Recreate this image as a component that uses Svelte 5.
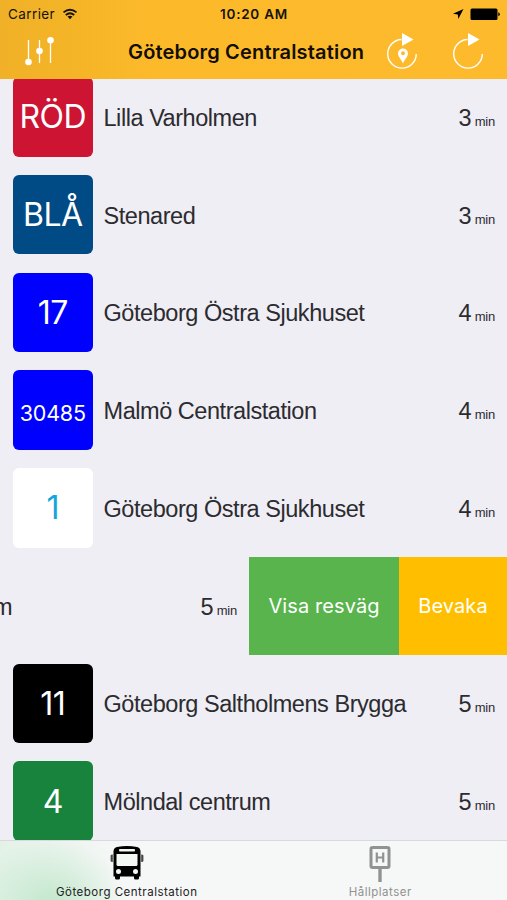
<script>
  const departures = [
    { line: 'RÖD', name: 'Lilla Varholmen', minutes: 3, color: '#cd1432' },
    { line: 'BLÅ', name: 'Stenared', minutes: 3, color: '#004b85' },
    { line: '17', name: 'Göteborg Östra Sjukhuset', minutes: 4, color: '#0000ff' },
    { line: '30485', name: 'Malmö Centralstation', minutes: 4, color: '#0000ff' },
    { line: '1', name: 'Göteborg Östra Sjukhuset', minutes: 4, color: '#ffffff', text: '#14a5dc' },
    { name: 'm', minutes: 5, swiped: true },
    { line: '11', name: 'Göteborg Saltholmens Brygga', minutes: 5, color: '#000000' },
    { line: '4', name: 'Mölndal centrum', minutes: 5, color: '#17833c' }
  ];
</script>

<div class="phone">
  <header>
    <div class="status-bar">
      <div class="carrier">
        <span>Carrier</span>
        <svg width="16" height="12" viewBox="0 0 16 12">
          <path d="M1.5 4.4Q8-1 14.5 4.4M3.8 7Q8 3.5 12.2 7" fill="none" stroke="#15120a" stroke-width="1.8" />
          <path d="M5.5 8.6Q8 6.7 10.5 8.6L8 11.2z" fill="#15120a" />
        </svg>
      </div>
      <span class="clock">10:20 AM</span>
      <div class="battery">
        <svg width="48" height="14" viewBox="0 0 48 14">
          <path d="M11.5 2L1 6.8L5.8 7.5L6.3 12z" fill="#000" />
          <rect x="18.5" y="1.5" width="27" height="11.5" rx="1.5" fill="#000" />
          <path d="M46.3 5.2q1.5.4 1.5 2t-1.5 2z" fill="#000" />
        </svg>
      </div>
    </div>
    <div class="nav-bar">
      <button aria-label="Filter" class="filter">
        <svg width="30" height="30" viewBox="0 0 30 30" fill="#fff">
          <path d="M4.5 3v22M15.5 3v23M26.5 3v23" stroke="#fff" stroke-width="1.3" />
          <circle cx="4.5" cy="25" r="3.3" />
          <circle cx="15.5" cy="14" r="3.3" />
          <circle cx="26.5" cy="3.3" r="3.3" />
        </svg>
      </button>
      <h1>Göteborg Centralstation</h1>
      <div class="nav-actions">
        <button aria-label="Nearby">
          <svg width="32" height="38" viewBox="0 0 32 38">
            <path d="M15.5 7.5A14.3 14.3 0 1 0 30.3 22" fill="none" stroke="#fff" stroke-width="1.4" />
            <path d="M16 1v13l11.5-6.5z" fill="#fff" />
            <path d="M17 31.5c-1-3.5-5-6.5-5-10a5 5 0 0 1 10 0c0 3.5-4 6.5-5 10zM17 19.3a2 2 0 1 0 0 4 2 2 0 0 0 0-4z" fill="#fff" fill-rule="evenodd" />
          </svg>
        </button>
        <button aria-label="Refresh">
          <svg width="32" height="38" viewBox="0 0 32 38">
            <path d="M15.5 7.5A14.3 14.3 0 1 0 30.3 22" fill="none" stroke="#fff" stroke-width="1.4" />
            <path d="M16 1v13l11.5-6.5z" fill="#fff" />
          </svg>
        </button>
      </div>
    </div>
  </header>

  <main>
    {#each departures as departure}
      <div class="departure" class:swiped={departure.swiped}>
        {#if !departure.swiped}
          <div
            class="line"
            class:small={departure.line.length > 3}
            style:background={departure.color}
            style:color={departure.text ?? '#fff'}
          >
            {departure.line}
          </div>
        {/if}
        <span class="name">{departure.name}</span>
        <span class="time">{departure.minutes}<small>min</small></span>
        {#if departure.swiped}
          <button class="action route">Visa resväg</button>
          <button class="action watch">Bevaka</button>
        {/if}
      </div>
    {/each}
  </main>

  <nav class="tab-bar">
    <div class="tab active">
      <svg width="34" height="34" viewBox="0 0 34 34">
        <path d="M7 1Q17-.8 27 1Q30 1.6 30.5 5V30.5H29V32a1.5 1.5 0 0 1-1.5 1.5h-2A1.5 1.5 0 0 1 24 32V30.5H10V32a1.5 1.5 0 0 1-1.5 1.5h-2A1.5 1.5 0 0 1 5 32V30.5H3.5V5Q4 1.6 7 1z" fill="#000" />
        <rect x="9" y="3" width="16" height="2.4" rx="1" fill="#f4f8f5" />
        <path d="M6.5 8h21v10.5q0 1.5-1.5 1.5H8q-1.5 0-1.5-1.5z" fill="#f4f8f5" />
        <circle cx="8.5" cy="25.5" r="2.5" fill="#f4f8f5" />
        <circle cx="25.5" cy="25.5" r="2.5" fill="#f4f8f5" />
        <path d="M.6 9.500q0-1 2.2-1v7.500q-2.200 0-2.200-1zM33.400 9.500q0-1-2.200-1v7.500q2.200 0 2.200-1z" fill="#444" />
      </svg>
      <span>Göteborg Centralstation</span>
    </div>
    <div class="tab">
      <svg width="22" height="38" viewBox="0 0 22 38" fill="none" stroke="#929292">
        <rect x="2" y="1.5" width="18" height="20" rx="1.5" stroke-width="3" />
        <path d="M7.8 6.5v10M14.2 6.5v10M7.8 11.5h6.4" stroke-width="2.2" />
        <path d="M11 22v14" stroke-width="3.4" />
      </svg>
      <span>Hållplatser</span>
    </div>
  </nav>
</div>

<style>
  :global(body) {
    margin: 0;
  }

  .phone {
    display: flex;
    flex-direction: column;
    width: 507px;
    height: 900px;
    overflow: hidden;
    background: #efeef4;
    font-family: Inter, "Liberation Sans", sans-serif;
    color: #2b2b30;
  }

  button {
    padding: 0;
    border: 0;
    background: none;
    font: inherit;
    cursor: pointer;
  }

  svg {
    display: block;
  }

  header {
    flex: none;
    height: 79px;
    background: linear-gradient(90deg, #f0b128 0, #f5b527 85px, #fcba2b 150px, #fdba2c 100%);
  }

  .status-bar {
    display: grid;
    grid-template-columns: 1fr auto 1fr;
    align-items: center;
    height: 27px;
    padding: 0 7px 0 8px;
    font-size: 13.5px;
    color: #15120a;
  }

  .carrier {
    display: flex;
    align-items: center;
    gap: 7px;
    letter-spacing: 0.4px;
  }

  .clock {
    font-weight: 600;
    letter-spacing: 0.75px;
  }

  .battery {
    display: flex;
    justify-content: flex-end;
  }

  .nav-bar {
    display: grid;
    grid-template-columns: 104px 1fr 120px;
    align-items: center;
    height: 48px;
    padding: 0 23px 0 24px;
  }

  .filter {
    width: 30px;
    height: 29px;
  }

  h1 {
    margin: 2px 0 0;
    font-size: 20px;
    font-weight: 600;
    letter-spacing: 0.17px;
    white-space: nowrap;
    color: #120e04;
  }

  .nav-actions {
    display: flex;
    justify-content: flex-end;
    gap: 34px;
  }

  main {
    flex: 1;
    min-height: 0;
    overflow: hidden;
  }

  .departure {
    display: flex;
    align-items: center;
    height: 97.75px;
    padding: 0 12px 0 13px;
    box-sizing: border-box;
  }

  .departure:first-child {
    margin-top: -11px;
  }

  .line {
    display: flex;
    flex: none;
    align-items: center;
    justify-content: center;
    width: 79.5px;
    height: 79.5px;
    margin-right: 11px;
    border-radius: 6px;
    font-size: 32px;
    font-weight: 400;
    letter-spacing: -0.6px;
  }

  .line.small {
    padding-top: 5px;
    box-sizing: border-box;
    font-size: 21.5px;
    letter-spacing: -0.2px;
  }

  .name,
  .time {
    padding-top: 3px;
    font-family: "Liberation Sans", Arial, sans-serif;
    font-size: 23.5px;
  }

  .name {
    flex: 1;
    letter-spacing: -0.45px;
    white-space: nowrap;
  }

  small {
    margin-left: 3px;
    font-size: 13px;
    letter-spacing: -0.2px;
  }

  .departure.swiped {
    padding: 0;
  }

  .swiped .name {
    margin-left: -7px;
  }

  .swiped .time {
    margin-right: 12px;
  }

  .action {
    height: 100%;
    font-size: 20px;
    letter-spacing: 0.1px;
    color: #fff;
  }

  .route {
    width: 150px;
    background: #59b44d;
  }

  .watch {
    width: 108px;
    background: #ffbf00;
  }

  .tab-bar {
    display: flex;
    flex: none;
    height: 60px;
    box-sizing: border-box;
    border-top: 1px solid #d9d9dd;
    background:
      radial-gradient(ellipse 75px 65px at 50px 62px, #c3e8cd 0, rgba(246, 247, 247, 0) 100%),
      linear-gradient(90deg, #e3f2e7 0, #f6f7f7 125px);
  }

  .tab {
    display: flex;
    flex: 1;
    flex-direction: column;
    align-items: center;
    justify-content: space-between;
    padding: 5px 0 1px;
    font-size: 11.5px;
    letter-spacing: 0.5px;
    color: #929292;
  }

  .tab.active {
    color: #222;
  }
</style>
